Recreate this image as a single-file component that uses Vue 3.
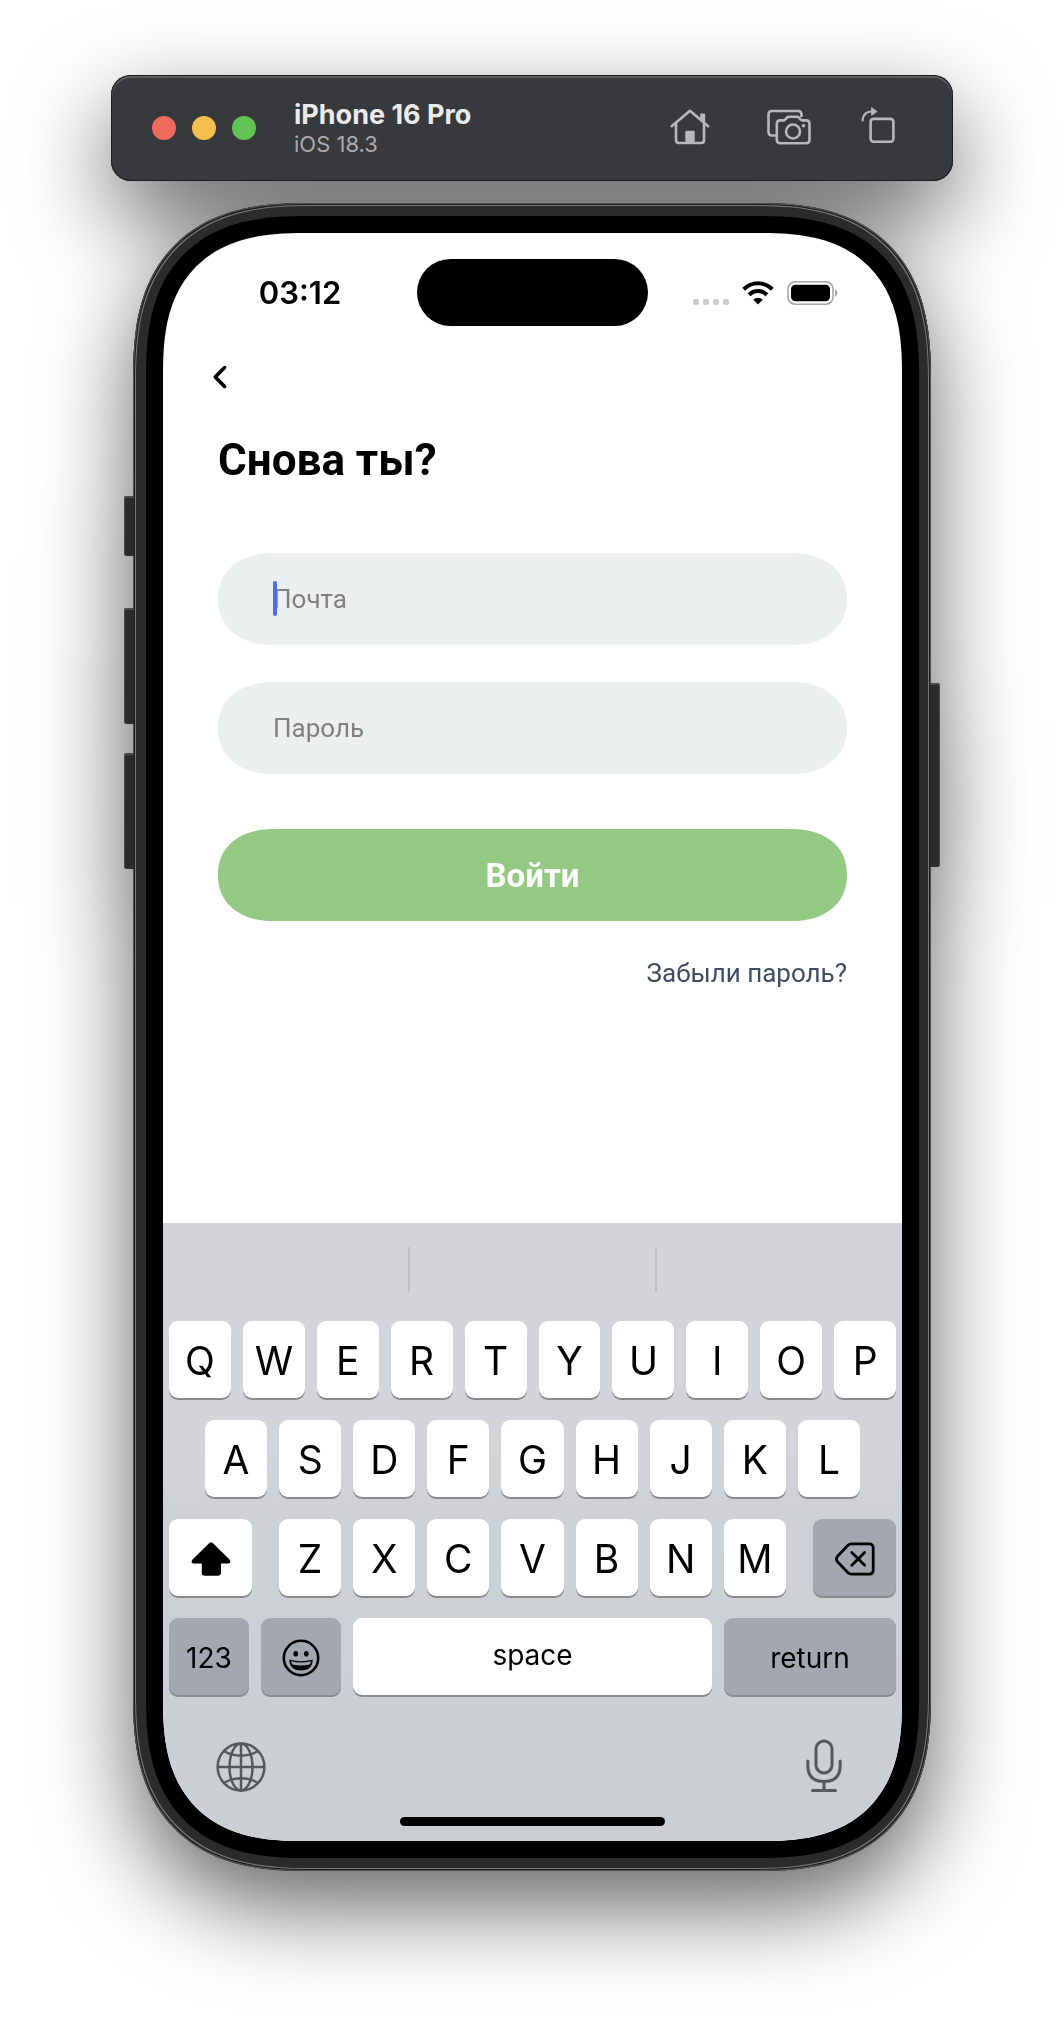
<script setup>
import { ref } from 'vue'

const email = ref('')
const password = ref('')

const topRow = 'QWERTYUIOP'.split('')
const homeRow = 'ASDFGHJKL'.split('')
const bottomRow = 'ZXCVBNM'.split('')
</script>

<template>
  <main class="desktop">
    <div class="simulator">
      <header class="toolbar">
        <div class="lights">
          <button class="light close" type="button" aria-label="Close"></button>
          <button class="light minimize" type="button" aria-label="Minimize"></button>
          <button class="light expand" type="button" aria-label="Zoom"></button>
        </div>
        <div class="device">
          <h2 class="device-name">iPhone 16 Pro</h2>
          <p class="device-os">iOS 18.3</p>
        </div>
        <nav class="tools">
          <button class="tool" type="button" aria-label="Home">
            <svg width="40" height="40" viewBox="0 0 40 40" fill="none" stroke="#b8b8bc" stroke-width="2.6" stroke-linecap="round" stroke-linejoin="round">
              <path d="M1.6 18.2 L20 2.8 L38.2 18.2" />
              <path d="M6 15 V32 Q6 35 9 35 H31.200 Q34 35 34 32 V15" />
              <path d="M31.4 11 V6.600 H34 V14" fill="#b8b8bc" stroke-width="2.400" />
              <path d="M16.600 34.500 V24 H23.400 V34.500 Z" fill="#b8b8bc" />
            </svg>
          </button>
          <button class="tool" type="button" aria-label="Screenshot">
            <svg width="44" height="40" viewBox="0 0 44 40" fill="none" stroke="#b8b8bc" stroke-width="2.600" stroke-linejoin="round">
              <path d="M9.500 27.500 H5 Q1.500 27.500 1.500 24 V6.500 Q1.500 3 5 3 H31 Q34.500 3 34.500 6.500 V9" />
              <path d="M13.300 12.400 H16.500 Q17.600 12.400 18.500 11.300 L19.700 9.900 Q20.600 8.800 22 8.800 H30 Q31.400 8.800 32.300 9.900 L33.500 11.300 Q34.400 12.400 35.500 12.400 H39 Q42.500 12.400 42.500 15.900 V31.700 Q42.500 35.200 39 35.200 H13.300 Q9.800 35.200 9.800 31.700 V15.900 Q9.800 12.400 13.300 12.400 Z" />
              <circle cx="26" cy="23.500" r="7" />
              <circle cx="36.500" cy="17.800" r="1.800" fill="#b8b8bc" stroke="none" />
            </svg>
          </button>
          <button class="tool rotate" type="button" aria-label="Rotate">
            <svg width="36" height="40" viewBox="0 0 36 40" fill="none" stroke="#b8b8bc" stroke-width="2.600">
              <path d="M1.600 13.500 Q1.600 3.600 11.500 3.600" stroke-width="2" />
              <path d="M10.200 -1 L16.600 3.500 L10.200 8 Z" fill="#b8b8bc" stroke="none" />
              <rect x="9.600" y="10.900" width="22.800" height="22.800" rx="3" />
            </svg>
          </button>
        </nav>
      </header>

      <div class="phone">
        <i class="side action"></i>
        <i class="side volume-up"></i>
        <i class="side volume-down"></i>
        <i class="side power"></i>
        <div class="bezel">
          <div class="screen">
            <div class="status">
              <time class="clock">03:12</time>
              <div class="island"></div>
              <div class="indicators">
                <div class="signal"><i></i><i></i><i></i><i></i></div>
                <svg width="32" height="24" viewBox="0 0 32 24" fill="none" stroke="#000" stroke-width="4">
                  <path d="M1.700 8.300 Q8 2.300 16 2.300 Q24 2.300 30.300 8.300" />
                  <path d="M7 13.800 Q11 10 16 10 Q21 10 25 13.800" />
                  <path d="M16 23.500 L11.200 18.800 Q13.300 16.800 16 16.800 Q18.700 16.800 20.800 18.800 Z" fill="#000" stroke="none" />
                </svg>
                <svg width="51" height="24" viewBox="0 0 51 24">
                  <rect x="1" y="0.800" width="45" height="22.400" rx="7" fill="none" stroke="#a6a6a6" stroke-width="1.600" />
                  <rect x="4" y="3.800" width="39" height="16.400" rx="4.500" fill="#000" />
                  <path d="M48 8 Q50.500 9.500 50.500 12 Q50.500 14.500 48 16 Z" fill="#a6a6a6" />
                </svg>
              </div>
            </div>

            <button class="back" type="button" aria-label="Назад">
              <svg width="16" height="24" viewBox="0 0 16 24" fill="none" stroke="#000" stroke-width="3.600" stroke-linecap="round" stroke-linejoin="round">
                <path d="M12.600 2.600 L3.200 12 L12.600 21.400" />
              </svg>
            </button>

            <form class="login" @submit.prevent>
              <h1 class="title">Снова ты?</h1>
              <div class="field">
                <input v-model="email" class="input" type="email" placeholder="Почта" aria-label="Почта" />
                <span class="caret"></span>
              </div>
              <div class="field">
                <input v-model="password" class="input" type="password" placeholder="Пароль" aria-label="Пароль" />
              </div>
              <button class="submit" type="submit">Войти</button>
              <a class="forgot" href="#">Забыли пароль?</a>
            </form>

            <div class="keyboard">
              <div class="suggestions"><span></span><span></span><span></span></div>
              <div class="rows">
                <div class="row">
                  <button v-for="k in topRow" :key="k" class="key" type="button">{{ k }}</button>
                </div>
                <div class="row inset">
                  <button v-for="k in homeRow" :key="k" class="key" type="button">{{ k }}</button>
                </div>
                <div class="row spread">
                  <button class="key wide" type="button" aria-label="Shift">
                    <svg width="40" height="34" viewBox="0 0 40 34">
                      <path d="M18.300 1 Q20 -0.500 21.700 1 L38.500 17.500 Q40.800 21 37.500 21.500 H30 V30.500 Q30 33.700 26.800 33.700 H14 Q10.800 33.700 10.800 30.500 V21.500 H2.500 Q-0.800 21 1.500 17.500 Z" />
                    </svg>
                  </button>
                  <div class="row letters">
                    <button v-for="k in bottomRow" :key="k" class="key" type="button">{{ k }}</button>
                  </div>
                  <button class="key wide dark" type="button" aria-label="Delete">
                    <svg width="40" height="34" viewBox="0 0 40 34" fill="none" stroke="#000" stroke-width="2.800" stroke-linecap="round" stroke-linejoin="round">
                      <path d="M16.500 1.800 H34 Q38.200 1.800 38.200 6 V28 Q38.200 32.200 34 32.200 H16.500 Q14.500 32.200 13 30.800 L2.300 19.500 Q0.500 17 2.300 14.500 L13 3.200 Q14.500 1.800 16.500 1.800 Z" />
                      <path d="M16.800 10.500 L29.600 23.300 M29.600 10.500 L16.800 23.300" />
                    </svg>
                  </button>
                </div>
                <div class="row">
                  <button class="key word dark mode" type="button">123</button>
                  <button class="key word dark mode" type="button" aria-label="Emoji">
                    <svg width="38" height="38" viewBox="0 0 38 38">
                      <circle cx="19" cy="19" r="17.200" fill="none" stroke="#000" stroke-width="2.600" />
                      <ellipse cx="13.700" cy="14.700" rx="2.300" ry="2.800" />
                      <ellipse cx="24.300" cy="14.700" rx="2.300" ry="2.800" />
                      <path d="M7.300 20.500 Q19 23.800 30.700 20.500 Q30.500 31.500 19 31.500 Q7.500 31.500 7.300 20.500 Z" />
                      <path d="M9 22.200 Q19 24.800 29 22.200 Q28.600 24.200 27.500 25.400 Q19 27.400 10.500 25.400 Q9.400 24.200 9 22.200 Z" fill="#a3a7b2" />
                    </svg>
                  </button>
                  <button class="key word space" type="button">space</button>
                  <button class="key word dark return" type="button">return</button>
                </div>
              </div>
              <div class="dock">
                <button class="dock-button" type="button" aria-label="Language">
                  <svg width="50" height="52" viewBox="0 0 50 52" fill="none" stroke="#55585d" stroke-width="2.500">
                    <circle cx="25" cy="26" r="23.400" />
                    <ellipse cx="25" cy="26" rx="11.500" ry="23.400" />
                    <path d="M25 2.500 V49.500 M1.500 26 H48.500 M8.500 10.500 Q25 19 41.500 10.500 M8.500 41.500 Q25 33 41.500 41.500" />
                  </svg>
                </button>
                <button class="dock-button" type="button" aria-label="Dictation">
                  <svg width="36" height="54" viewBox="0 0 36 54" fill="none" stroke="#55585d" stroke-width="3" stroke-linecap="round">
                    <rect x="10" y="1" width="16" height="32" rx="8" />
                    <path d="M1.800 21 V25.500 Q1.800 41.500 18 41.500 Q34.200 41.500 34.200 25.500 V21 M18 41.500 V50 M6.500 50.500 H29.500" />
                  </svg>
                </button>
              </div>
              <div class="home-indicator"></div>
            </div>
          </div>
        </div>
      </div>
    </div>
  </main>
</template>

<style>
body {
  margin: 0;
  background: #fff;
}
</style>

<style scoped>
.desktop {
  box-sizing: border-box;
  padding: 75px 24px 152px;
  font-family: Inter, "Liberation Sans", sans-serif;
}

button {
  margin: 0;
  padding: 0;
  border: 0;
  background: none;
  font: inherit;
  color: inherit;
}

svg {
  display: block;
  overflow: visible;
}

.simulator {
  display: flex;
  flex-direction: column;
  align-items: center;
  gap: 22px;
  filter: drop-shadow(0 36px 46px rgba(0, 0, 0, 0.6));
}

.toolbar {
  box-sizing: border-box;
  display: flex;
  align-items: center;
  width: 100%;
  max-width: 842px;
  height: 106px;
  padding: 0 56px 0 41px;
  border-radius: 20px;
  background: #38393c;
  box-shadow: inset 0 0 0 1px #1d1d1f, inset 0 2px 0 1px #5e5e61;
}

.lights {
  display: flex;
  gap: 16px;
}

.light {
  width: 24px;
  height: 24px;
  border-radius: 50%;
}

.close {
  background: #ed6a5e;
}

.minimize {
  background: #f5bf4f;
}

.expand {
  background: #61c554;
}

.device {
  flex: 1;
  margin-left: 38px;
}

.device-name {
  margin: 0;
  font-size: 27px;
  line-height: 32px;
  font-weight: 700;
  color: #ebebeb;
}

.device-os {
  margin: 0;
  font-size: 22px;
  line-height: 26px;
  color: #a9a9ae;
}

.tools {
  display: flex;
  gap: 57px;
}

.rotate {
  margin-left: -7px;
}

.phone {
  position: relative;
  box-sizing: border-box;
  width: 100%;
  max-width: 798px;
  padding: 13px 12px 13px 13px;
  border-radius: 146px;
  background: #2b2b2b;
  box-shadow: inset 0 0 0 1px #505050, inset 0 0 0 2px #1c1c1c, inset 0 0 0 3px #7a7a7a;
}

.side {
  position: absolute;
  left: -9px;
  width: 10px;
  border-radius: 3px 0 0 3px;
  background: #2b2b2b;
  box-shadow: inset 1px 0 0 #4a4a4a, inset 0 2px 0 #4a4a4a;
}

.action {
  top: 293px;
  height: 60px;
}

.volume-up {
  top: 405px;
  height: 116px;
}

.volume-down {
  top: 550px;
  height: 116px;
}

.power {
  top: 480px;
  right: -9px;
  left: auto;
  height: 184px;
  border-radius: 0 3px 3px 0;
  box-shadow: inset -1px 0 0 #4a4a4a, inset 0 2px 0 #4a4a4a;
}

.bezel {
  padding: 17px;
  border-radius: 133px;
  background: #000;
}

.screen {
  display: flex;
  flex-direction: column;
  min-height: 1608px;
  overflow: hidden;
  border-radius: 116px;
  background: #fff;
}

.status {
  display: grid;
  grid-template-columns: 1fr 231px 1fr;
  align-items: center;
  height: 67px;
  padding: 26px 64px 0;
}

.clock {
  justify-self: center;
  padding-right: 44px;
  font-size: 31px;
  line-height: 38px;
  font-weight: 600;
}

.island {
  height: 67px;
  border-radius: 34px;
  background: #000;
}

.indicators {
  display: flex;
  justify-content: flex-end;
  align-items: center;
  gap: 13px;
}

.signal {
  display: flex;
  align-self: flex-end;
  gap: 4px;
}

.signal i {
  width: 6px;
  height: 6px;
  border-radius: 2px;
  background: #ccc;
}

.back {
  align-self: flex-start;
  margin: 39px 0 0 49px;
}

.login {
  display: flex;
  flex-direction: column;
  flex: 1;
  padding: 45px 55px 40px;
  font-family: Roboto, "Liberation Sans", sans-serif;
}

.title {
  margin: 0 0 67px;
  font-size: 44px;
  line-height: 52px;
  font-weight: 700;
  color: #000;
}

.field {
  position: relative;
  margin-bottom: 37px;
}

.input {
  display: block;
  box-sizing: border-box;
  width: 100%;
  height: 92px;
  padding: 0 55px;
  border: 0;
  border-radius: 46px;
  outline: 0;
  background: #ebeff0;
  font-family: inherit;
  font-size: 26px;
  color: #000;
}

.input::placeholder {
  color: #808080;
  opacity: 1;
}

.caret {
  position: absolute;
  top: 28px;
  left: 55px;
  width: 4px;
  height: 35px;
  border-radius: 2px;
  background: #4f6bf0;
}

.submit {
  height: 92px;
  margin-top: 18px;
  border-radius: 46px;
  background: #93c983;
  font-size: 33px;
  font-weight: 700;
  color: #fff;
}

.forgot {
  align-self: flex-end;
  margin-top: 36px;
  font-size: 26px;
  line-height: 32px;
  color: #3f4d63;
  text-decoration: none;
}

.keyboard {
  display: flex;
  flex-direction: column;
  padding-bottom: 15px;
  background: linear-gradient(#d3d4d9 35%, #cdd0d5 50%, #cbced3);
}

.suggestions {
  display: flex;
  padding: 24px 0 29px;
}

.suggestions span {
  box-sizing: border-box;
  flex: 1;
  height: 45px;
}

.suggestions span + span {
  border-left: 2px solid #bfc0c5;
}

.rows {
  display: flex;
  flex-direction: column;
  gap: 22px;
  padding: 0 6px;
}

.row {
  display: flex;
  gap: 12px;
}

.inset {
  padding: 0 36px;
}

.spread {
  gap: 27px;
}

.letters {
  flex: 1;
}

.key {
  display: flex;
  flex: 1;
  justify-content: center;
  align-items: center;
  box-sizing: border-box;
  min-width: 0;
  height: 77px;
  padding-top: 2px;
  border-radius: 9px;
  background: #fff;
  box-shadow: 0 2px 0 #898a8d;
  font-size: 39px;
  line-height: 48px;
  color: #000;
}

.wide {
  flex: 0 0 83px;
}

.mode {
  flex: 0 0 80px;
}

.return {
  flex: 0 0 172px;
}

.dark {
  background: #a3a7b2;
}

.word {
  font-size: 28px;
  line-height: 36px;
}

.space {
  padding: 0 0 4px;
}

.dock {
  display: flex;
  justify-content: space-between;
  align-items: center;
  padding: 45px 60px 23px 53px;
}

.home-indicator {
  align-self: center;
  width: 265px;
  height: 9px;
  border-radius: 5px;
  background: #000;
}

@supports (corner-shape: superellipse(1.35)) {
  .phone {
    border-radius: 176px;
    corner-shape: superellipse(1.35);
  }

  .bezel {
    border-radius: 160px;
    corner-shape: superellipse(1.35);
  }

  .screen {
    border-radius: 140px;
    corner-shape: superellipse(1.35);
  }

  .input,
  .submit {
    border-radius: 56px / 46px;
    corner-shape: superellipse(1.15);
  }
}
</style>
